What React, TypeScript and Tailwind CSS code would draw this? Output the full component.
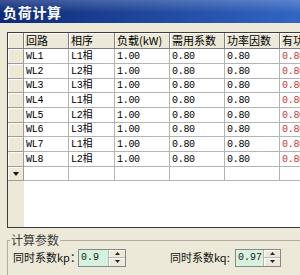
import React from "react";

const cols = [
  { title: "回路", w: "w-[45px]" },
  { title: "相序", w: "w-[46px]" },
  { title: "负载(kW)", w: "w-[55px]" },
  { title: "需用系数", w: "w-[55px]" },
  { title: "功率因数", w: "w-[55px]" },
  { title: "有功功率", w: "w-[55px]" },
];

const rows = [
  ["WL1", "L1相"],
  ["WL2", "L2相"],
  ["WL3", "L3相"],
  ["WL4", "L1相"],
  ["WL5", "L2相"],
  ["WL6", "L3相"],
  ["WL7", "L1相"],
  ["WL8", "L2相"],
];

// 行高交替 15/14，保证总高度与原图一致
const rowH = ["h-[15px]", "h-[15px]", "h-[14px]", "h-[15px]", "h-[15px]", "h-[14px]", "h-[15px]", "h-[15px]", "h-[14px]"];

const cellFont = "font-['Liberation_Mono','Noto_Sans_CJK_SC',monospace] text-[10px] tracking-[-0.3px]";

function Spin() {
  return (
    <div className="flex flex-col w-[17px] h-full border-l border-[#b8b8b0]">
      <div className="flex-1 flex items-center justify-center bg-[#ece9d8] border-b border-[#b8b8b0] shadow-[inset_1px_1px_0_#fff]">
        <svg width="5" height="3" viewBox="0 0 5 3"><path d="M0 3 L2.5 0 L5 3 Z" fill="#222" /></svg>
      </div>
      <div className="flex-1 flex items-center justify-center bg-[#ece9d8] shadow-[inset_1px_1px_0_#fff]">
        <svg width="5" height="3" viewBox="0 0 5 3"><path d="M0 0 L2.5 3 L5 0 Z" fill="#222" /></svg>
      </div>
    </div>
  );
}

function NumInput({ value, w }: { value: string; w: string }) {
  return (
    <div className={`flex h-[18px] ${w} border border-[#7f8a94] bg-[#d6f2dc]`}>
      <div className="flex-1 flex items-center pl-[2px] font-['Liberation_Mono',monospace] text-[10px] text-[#222]">{value}</div>
      <Spin />
    </div>
  );
}

export default function App() {
  return (
    <div className="w-[300px] h-[275px] overflow-hidden bg-[#ece9d8] font-['Noto_Sans_CJK_SC',sans-serif]">
      <div className="h-[23px] flex items-center pl-[3px] bg-[linear-gradient(180deg,rgba(255,255,255,0.2),rgba(255,255,255,0)_55%),linear-gradient(90deg,#0d2a78,#3366c2)]">
        <span className="text-white font-bold text-[14px] tracking-[0.7px] leading-none">负荷计算</span>
      </div>

      <div className="ml-[7px] mt-[9px] w-[340px] h-[196px] flex flex-col border border-[#3c3c3c] bg-white">
        {/* 表头 */}
        <div className="flex h-[16px] shrink-0">
          <div className="w-[16px] bg-[#ece9d8] border-r border-b border-[#808080] shadow-[inset_1px_1px_0_#fff]" />
          {cols.map(c => (
            <div key={c.title} className={`${c.w} shrink-0 flex items-center pl-[2px] bg-[#ece9d8] border-r border-b border-[#808080] shadow-[inset_1px_1px_0_#fff] text-[11px] text-black whitespace-nowrap overflow-hidden`}>
              {c.title}
            </div>
          ))}
        </div>

        {rows.map((r, i) => (
          <div key={r[0]} className={`flex shrink-0 ${rowH[i]}`}>
            <div className="w-[16px] bg-[#ece9d8] border-r border-b border-[#9d9d9d] shadow-[inset_1px_1px_0_#fff]" />
            <div className={`${cols[0].w} shrink-0 flex items-center pl-[2px] border-r border-b border-[#b4b4b4] ${cellFont}`}>{r[0]}</div>
            <div className={`${cols[1].w} shrink-0 flex items-center pl-[2px] border-r border-b border-[#b4b4b4] ${cellFont}`}>{r[1]}</div>
            <div className={`${cols[2].w} shrink-0 flex items-center pl-[2px] border-r border-b border-[#b4b4b4] ${cellFont}`}>1.00</div>
            <div className={`${cols[3].w} shrink-0 flex items-center pl-[2px] border-r border-b border-[#b4b4b4] ${cellFont}`}>0.80</div>
            <div className={`${cols[4].w} shrink-0 flex items-center pl-[2px] border-r border-b border-[#b4b4b4] ${cellFont}`}>0.80</div>
            <div className={`${cols[5].w} shrink-0 flex items-center pl-[2px] border-r border-b border-[#b4b4b4] text-[#c8383a] ${cellFont}`}>0.80</div>
          </div>
        ))}

        {/* 新行 */}
        <div className={`flex shrink-0 ${rowH[8]}`}>
          <div className="w-[16px] flex items-center pl-[5px] bg-[#ece9d8] border-r border-b border-[#9d9d9d] shadow-[inset_1px_1px_0_#fff]">
            <svg width="6" height="4" viewBox="0 0 6 4"><path d="M0 0 L6 0 L3 4 Z" fill="#111" /></svg>
          </div>
          {cols.map(c => (
            <div key={c.title} className={`${c.w} shrink-0 border-r border-b border-[#b4b4b4]`} />
          ))}
        </div>

        <div className="flex-1 flex">
          <div className="w-[16px] bg-[#ece9d8]" />
        </div>
      </div>

      <fieldset className="ml-[7px] mt-[5px] w-[310px] border border-[#b0ad9e] pl-[2px] pt-[1px] pb-[10px]">
        <legend className="px-[1px] text-[12px] leading-[14px] text-[#3a3a3a]">计算参数</legend>
        <div className="flex items-center h-[19px] text-[11px] text-[#111]">
          <span className="ml-[3px] w-[65px] whitespace-nowrap">同时系数kp：</span>
          <NumInput value="0.9" w="w-[48px]" />
          <span className="ml-[44px] w-[65px] whitespace-nowrap">同时系数kq:</span>
          <NumInput value="0.97" w="w-[46px]" />
        </div>
      </fieldset>
    </div>
  );
}
